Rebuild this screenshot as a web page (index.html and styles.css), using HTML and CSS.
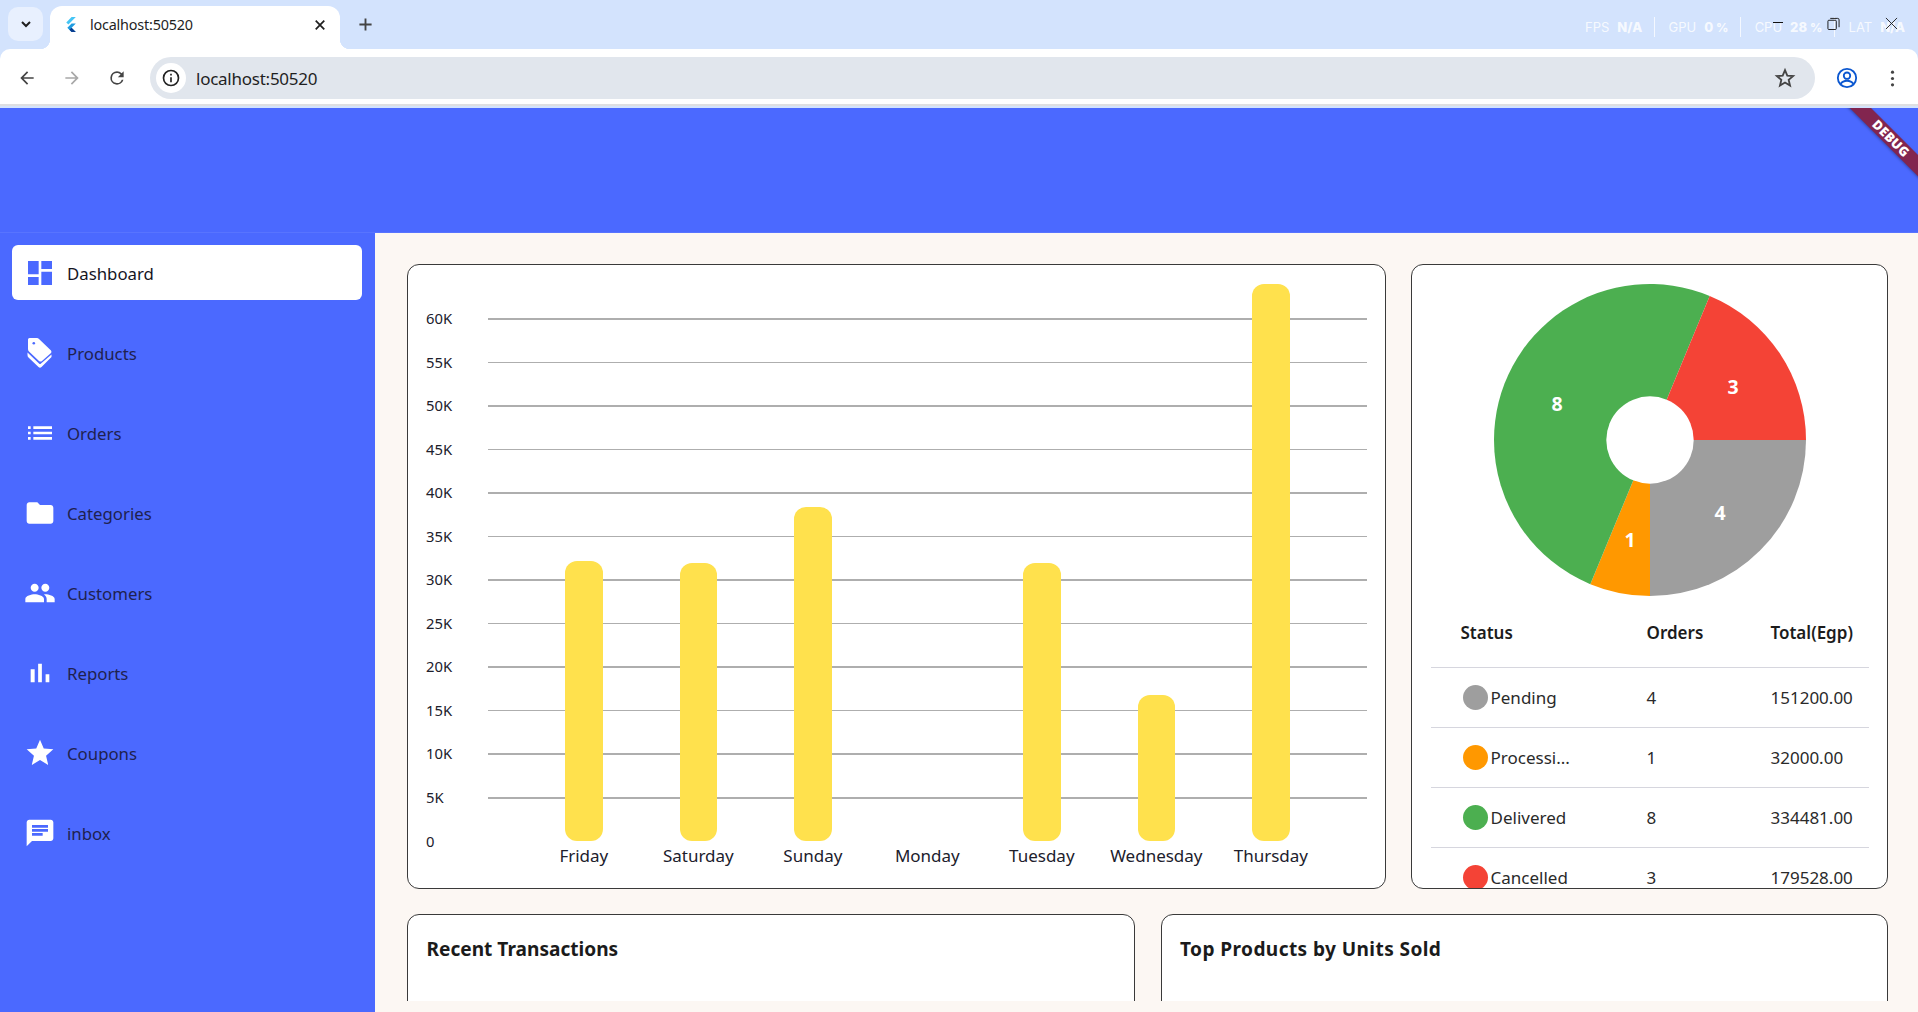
FILE: index.html
```html
<!DOCTYPE html>
<html lang="en">
<head>
<meta charset="utf-8">
<title>localhost:50520</title>
<link rel="stylesheet" href="styles.css">
</head>
<body>
<div class="browser">
  <div class="tabstrip">
    <button class="tab-menu"><svg class="ic-16" viewBox="0 0 24 24"><path d="M6 9l6 6 6-6" fill="none" stroke="#1f1f1f" stroke-width="3"/></svg></button>
    <div class="tab">
      <svg class="favicon" viewBox="0 0 12 16"><path d="M7 1h4L4 8 2 6z" fill="#45c5f5"/><path d="M7 7h4L7 11l4 4H7L3 11z" fill="#1f9be0"/><path d="M5 13l2-2 4 4H7z" fill="#0a3d8f"/></svg>
      <span class="tab-title">localhost:50520</span>
      <svg class="ic-14" viewBox="0 0 14 14"><path d="M2 2l10 10M12 2L2 12" stroke="#1f1f1f" stroke-width="2"/></svg>
    </div>
    <svg class="newtab" viewBox="0 0 16 16"><path d="M8 1.500v13M1.500 8h13" stroke="#444" stroke-width="2"/></svg>
    <div class="perf">
      <span class="perf-k">FPS</span><b>N/A</b><i class="perf-sep"></i>
      <span class="perf-k">GPU</span><b>0 <small>%</small></b><i class="perf-sep"></i>
      <span class="perf-k">CPU</span><b>28 <small>%</small></b><i class="perf-sep"></i>
      <span class="perf-k">LAT</span><b>N/A</b>
    </div>
    <div class="winctl">
      <span class="win-min"></span>
      <svg class="win-max" viewBox="0 0 14 14"><path d="M1 4.500a1 1 0 0 1 1-1h7a1 1 0 0 1 1 1v8a1 1 0 0 1-1 1H2a1 1 0 0 1-1-1zM3.500 1.500h8a1.500 1.500 0 0 1 1.500 1.500v8" fill="none" stroke="#111" stroke-width="1"/></svg>
      <svg class="win-close" viewBox="0 0 14 14"><path d="M1 1l12 12M13 1L1 13" stroke="#222" stroke-width="1"/></svg>
    </div>
  </div>
  <div class="toolbar">
    <svg class="tool" viewBox="0 0 24 24"><path d="M20 11H7.830l5.590-5.590L12 4l-8 8 8 8 1.410-1.410L7.830 13H20z" fill="#444"/></svg>
    <svg class="tool tool-off" viewBox="0 0 24 24"><path d="M4 11h12.170l-5.590-5.590L12 4l8 8-8 8-1.410-1.410L16.170 13H4z" fill="#a8a8a8"/></svg>
    <svg class="tool" viewBox="0 0 24 24"><path d="M17.650 6.350A7.960 7.960 0 0 0 12 4a8 8 0 1 0 7.730 10h-2.080A6 6 0 1 1 12 6c1.660 0 3.140.69 4.220 1.780L13 11h7V4z" fill="#444"/></svg>
    <div class="omnibox">
      <span class="site-info"><svg class="ic-20" viewBox="0 0 24 24"><circle cx="12" cy="12" r="9" fill="none" stroke="#222" stroke-width="2"/><path d="M11 11h2v6h-2zM11 7h2v2h-2z" fill="#222"/></svg></span>
      <span class="url">localhost:50520</span>
      <svg class="star" viewBox="0 0 24 24"><path d="M12 3.500l2.500 5.900 6.400.5-4.900 4.200 1.500 6.200L12 17l-5.500 3.300L8 14.100 3.100 9.900l6.400-.5z" fill="none" stroke="#444" stroke-width="2"/></svg>
    </div>
    <svg class="profile" viewBox="0 0 24 24"><circle cx="12" cy="12" r="10" fill="none" stroke="#0b57d0" stroke-width="2"/><circle cx="12" cy="9.500" r="3.500" fill="none" stroke="#0b57d0" stroke-width="2"/><path d="M5 18.500c2-3 4.500-3.500 7-3.500s5 .5 7 3.500" fill="none" stroke="#0b57d0" stroke-width="2"/></svg>
    <svg class="dots" viewBox="0 0 6 24"><circle cx="3" cy="4" r="2" fill="#444"/><circle cx="3" cy="12" r="2" fill="#444"/><circle cx="3" cy="20" r="2" fill="#444"/></svg>
  </div>
</div>

<div class="app">
  <header class="appbar"></header>
  <div class="ribbon"><span>DEBUG</span></div>
  <div class="app-body">
    <nav class="sidebar">
      <a class="nav-item active"><svg class="nav-icon" viewBox="0 0 24 24"><path d="M3 13h8V3H3v10zm0 8h8v-6H3v6zm10 0h8V11h-8v10zm0-18v6h8V3h-8z"/></svg>Dashboard</a>
      <a class="nav-item"><svg class="nav-icon" viewBox="0 0 32 32"><path d="M4 2.500Q4 1 5.500 1H13Q14 1 15 2L27 13.500Q28 15 27 16L18 24Q16.500 25 15 24L5 14.500Q4 13.500 4 12Z"/><path d="M3.500 15.500L15 26.500Q16 27.500 17 26.500L27.500 17.500V20L17.500 30Q16 31.500 14.500 30L4.500 20.500Q3.500 19.500 3.500 18Z"/><circle cx="9.800" cy="6.300" r="1.300" fill="#4b69ff"/></svg>Products</a>
      <a class="nav-item"><svg class="nav-icon" viewBox="0 0 24 24"><path d="M3 13h2v-2H3v2zm0 4h2v-2H3v2zm0-8h2V7H3v2zm4 4h14v-2H7v2zm0 4h14v-2H7v2zM7 7v2h14V7H7z"/></svg>Orders</a>
      <a class="nav-item"><svg class="nav-icon" viewBox="0 0 24 24"><path d="M10 4H4c-1.100 0-1.990.9-1.990 2L2 18c0 1.100.9 2 2 2h16c1.100 0 2-.9 2-2V8c0-1.100-.9-2-2-2h-8l-2-2z"/></svg>Categories</a>
      <a class="nav-item"><svg class="nav-icon" viewBox="0 0 24 24"><path d="M16 11c1.660 0 2.990-1.340 2.990-3S17.660 5 16 5c-1.660 0-3 1.340-3 3s1.340 3 3 3zm-8 0c1.660 0 2.990-1.340 2.990-3S9.660 5 8 5C6.340 5 5 6.340 5 8s1.340 3 3 3zm0 2c-2.330 0-7 1.170-7 3.500V19h14v-2.500c0-2.330-4.670-3.500-7-3.500zm8 0c-.29 0-.62.02-.97.05 1.160.84 1.970 1.970 1.970 3.450V19h6v-2.500c0-2.330-4.670-3.500-7-3.500z"/></svg>Customers</a>
      <a class="nav-item"><svg class="nav-icon" viewBox="0 0 24 24"><path d="M5 9.200h3V19H5zM10.600 5h2.800v14h-2.800zm5.600 8H19v6h-2.800z"/></svg>Reports</a>
      <a class="nav-item"><svg class="nav-icon" viewBox="0 0 24 24"><path d="M12 17.270L18.180 21l-1.640-7.030L22 9.240l-7.190-.61L12 2 9.190 8.630 2 9.240l5.460 4.730L5.820 21z"/></svg>Coupons</a>
      <a class="nav-item"><svg class="nav-icon" viewBox="0 0 24 24"><path d="M20 2H4c-1.100 0-1.990.9-1.990 2L2 22l4-4h14c1.100 0 2-.9 2-2V4c0-1.100-.9-2-2-2zM6 9h12v2H6V9zm8 5H6v-2h8v2zm4-6H6V6h12v2z"/></svg>inbox</a>
    </nav>

    <main class="main">
      <div class="main-clip">
        <div class="row-top">
          <section class="card card-chart">
            <div class="chart">
              <div class="grid-row"><span class="y-label">60K</span><i class="grid-line"></i></div>
              <div class="grid-row"><span class="y-label">55K</span><i class="grid-line"></i></div>
              <div class="grid-row"><span class="y-label">50K</span><i class="grid-line"></i></div>
              <div class="grid-row"><span class="y-label">45K</span><i class="grid-line"></i></div>
              <div class="grid-row"><span class="y-label">40K</span><i class="grid-line"></i></div>
              <div class="grid-row"><span class="y-label">35K</span><i class="grid-line"></i></div>
              <div class="grid-row"><span class="y-label">30K</span><i class="grid-line"></i></div>
              <div class="grid-row"><span class="y-label">25K</span><i class="grid-line"></i></div>
              <div class="grid-row"><span class="y-label">20K</span><i class="grid-line"></i></div>
              <div class="grid-row"><span class="y-label">15K</span><i class="grid-line"></i></div>
              <div class="grid-row"><span class="y-label">10K</span><i class="grid-line"></i></div>
              <div class="grid-row"><span class="y-label">5K</span><i class="grid-line"></i></div>
              <div class="grid-row"><span class="y-label">0</span></div>
              <div class="bars">
                <div class="bar-col"><i class="bar" style="height:280px"></i><span class="x-label">Friday</span></div>
                <div class="bar-col"><i class="bar" style="height:278px"></i><span class="x-label">Saturday</span></div>
                <div class="bar-col"><i class="bar" style="height:334px"></i><span class="x-label">Sunday</span></div>
                <div class="bar-col"><span class="x-label">Monday</span></div>
                <div class="bar-col"><i class="bar" style="height:278px"></i><span class="x-label">Tuesday</span></div>
                <div class="bar-col"><i class="bar" style="height:146px"></i><span class="x-label">Wednesday</span></div>
                <div class="bar-col"><i class="bar" style="height:557px"></i><span class="x-label">Thursday</span></div>
              </div>
            </div>
          </section>

          <section class="card card-status">
            <svg class="pie" viewBox="0 0 312 312">
              <path class="s-gray" d="M156 156H312A156 156 0 0 1 156 312Z"/>
              <path class="s-orange" d="M156 156V312A156 156 0 0 1 96.302 300.125Z"/>
              <path class="s-green" d="M156 156L96.302 300.125A156 156 0 0 1 0 156A156 156 0 0 1 215.698 11.875Z"/>
              <path class="s-red" d="M156 156L215.698 11.875A156 156 0 0 1 312 156Z"/>
              <circle class="s-hole" cx="156" cy="156" r="43.700"/>
              <text class="pie-label" x="239" y="102">3</text>
              <text class="pie-label" x="63" y="119">8</text>
              <text class="pie-label" x="226" y="228">4</text>
              <text class="pie-label" x="136" y="255">1</text>
            </svg>
            <div class="table">
              <div class="t-row t-head"><span class="c-status">Status</span><span class="c-orders">Orders</span><span>Total(Egp)</span></div>
              <div class="t-row"><span class="c-status"><i class="dot d-gray"></i><span class="st-name">Pending</span></span><span class="c-orders">4</span><span>151200.00</span></div>
              <div class="t-row"><span class="c-status"><i class="dot d-orange"></i><span class="st-name">Processi...</span></span><span class="c-orders">1</span><span>32000.00</span></div>
              <div class="t-row"><span class="c-status"><i class="dot d-green"></i><span class="st-name">Delivered</span></span><span class="c-orders">8</span><span>334481.00</span></div>
              <div class="t-row"><span class="c-status"><i class="dot d-red"></i><span class="st-name">Cancelled</span></span><span class="c-orders">3</span><span>179528.00</span></div>
            </div>
          </section>
        </div>
        <div class="row-bottom">
          <section class="card card-low"><h2 class="card-title">Recent Transactions</h2></section>
          <section class="card card-low"><h2 class="card-title card-title-wide">Top Products by Units Sold</h2></section>
        </div>
      </div>
    </main>
  </div>
</div>
</body>
</html>
```

FILE: styles.css
```css
* { box-sizing: border-box; }
html, body { margin: 0; height: 100%; }
body {
  width: 1918px;
  height: 1012px;
  overflow: hidden;
  display: flex;
  flex-direction: column;
  font-family: "Noto Sans", "Open Sans", sans-serif;
  color: #1d1d1d;
  background: #fcf7f3;
}
svg { display: block; flex: none; }

/* browser frame */
.browser { flex: none; height: 108px; background: #d3e3fd; position: relative; }
.tabstrip { height: 49px; display: flex; align-items: flex-start; position: relative; }
.tab-menu {
  margin: 7px 0 0 8px; width: 35px; height: 34px; border: 0; padding: 0;
  border-radius: 10px; background: #e8f0fe;
  display: flex; align-items: center; justify-content: center;
}
.ic-16 { width: 16px; height: 16px; }
.ic-14 { width: 12px; height: 12px; margin-left: auto; }
.ic-20 { width: 20px; height: 20px; }
.tab {
  margin: 6px 0 0 7px; width: 290px; height: 43px;
  background: #fff; border-radius: 12px 12px 0 0;
  display: flex; align-items: center; padding: 0 14px 6px 14px;
  position: relative;
}
.tab::before, .tab::after {
  content: ""; position: absolute; bottom: 0; width: 10px; height: 10px;
  background: radial-gradient(circle at 0 0, transparent 10px, #fff 10.500px);
}
.tab::before { left: -10px; }
.tab::after { right: -10px; background: radial-gradient(circle at 100% 0, transparent 10px, #fff 10.500px); }
.favicon { width: 13px; height: 17px; margin-right: 13px; }
.tab-title { font-size: 14.400px; letter-spacing: -.2px; color: #1f1f1f; }
.newtab { width: 15px; height: 15px; margin: 17px 0 0 18px; }
.perf {
  position: absolute; top: 16px; left: 1585px; width: 320px; height: 22px;
  display: flex; align-items: center; color: rgba(255,255,255,.82);
  font: 13px/22px Inter, sans-serif;
}
.perf-k { margin-right: 8px; }
.perf b { font-weight: 800; white-space: nowrap; }
.perf small { font-size: 12px; }
.perf-sep { width: 1px; height: 20px; background: rgba(255,255,255,.75); margin: 0 14px 0 12px; }
.winctl { position: absolute; top: 0; left: 0; width: 100%; height: 0; }
.win-min { position: absolute; left: 1773px; top: 22px; width: 10px; height: 1px; background: #111; }
.win-max { position: absolute; left: 1827px; top: 17px; width: 13px; height: 13px; }
.win-close { position: absolute; left: 1885px; top: 17px; width: 13px; height: 13px; }

.toolbar {
  height: 57px; background: #fff; border-radius: 10px 10px 0 0;
  border-bottom: 2px solid #dedfe2;
  display: flex; align-items: center; padding: 3px 16px 0 17px;
  position: relative;
}
.tool { width: 20px; height: 20px; margin-right: 25px; }
.omnibox {
  margin-left: -2px; width: 1665px; height: 42px; border-radius: 21px;
  background: #e1e6ed; display: flex; align-items: center; padding: 0 19px 0 6px;
}
.site-info {
  width: 30px; height: 30px; border-radius: 50%; background: #fff;
  display: flex; align-items: center; justify-content: center; margin-right: 10px;
}
.url { font-size: 17px; letter-spacing: -.25px; color: #1f1f1f; }
.star { width: 22px; height: 22px; margin-left: auto; }
.profile { width: 22px; height: 22px; margin-left: 21px; }
.dots { width: 5px; height: 19px; margin-left: 32px; }

/* app */
.app { flex: 1; position: relative; display: flex; flex-direction: column; min-height: 0; overflow: hidden; }
.appbar { height: 125px; flex: none; background: #4b69ff; border-bottom: 1px solid #5874ff; }
.ribbon {
  position: absolute; top: 22.750px; right: -43px; width: 140px; height: 14.500px;
  transform: rotate(45deg);
  background: #82254f; box-shadow: 0 1px 3px rgba(0,0,0,.35);
  display: flex; align-items: center; justify-content: center;
  color: #fff; font: 800 13px/14.500px "Open Sans", sans-serif; letter-spacing: .3px;
}
.app-body { flex: 1; display: flex; min-height: 0; }

.sidebar {
  width: 375px; flex: none; background: #4b69ff;
  padding: 12px 13px 0 12px;
  display: flex; flex-direction: column; gap: 25px;
}
.nav-item {
  height: 55px; display: flex; align-items: center; gap: 11px;
  padding: 1px 0 0 12px; border-radius: 6px;
  font-size: 16.800px; color: #20214f;
}
.nav-item.active { background: #fff; color: #15151f; }
.nav-icon { width: 32px; height: 32px; fill: #fff; }
.nav-item.active .nav-icon { fill: #4b69ff; }

.main { flex: 1; min-width: 0; padding: 0 30px 11px 32px; background: #fcf7f3; }
.main-clip { height: 100%; overflow: hidden; padding-top: 31px; display: flex; flex-direction: column; gap: 25px; }
.card {
  background: #fff; border: 1.500px solid #3a3a3a; border-radius: 12px;
  overflow: hidden;
}
.row-top { display: flex; gap: 25px; flex: none; height: 624.500px; }
.card-chart { width: 979px; position: relative; }
.card-status { flex: 1; display: flex; flex-direction: column; align-items: center; }
.row-bottom { display: flex; gap: 26px; flex: none; height: 200px; }
.card-low { flex: 1; padding: 20px 18.500px; }
.card-title { margin: 0; font-size: 19.100px; line-height: 28px; font-weight: 700; color: #1b1b1b; }
.card-title-wide { letter-spacing: .4px; }

/* bar chart */
.chart { position: absolute; left: 18px; top: 53px; right: 18.500px; display: flex; flex-direction: column; }
.grid-row { height: 43.550px; flex: none; display: flex; align-items: flex-start; }
.y-label {
  width: 62.200px; flex: none; font-size: 14.800px; line-height: 18px; margin-top: -9px; color: #20202c;
}
.grid-line { flex: 1; height: 1.500px; background: #aeaeae; }
.bars {
  position: absolute; left: 62.200px; right: 0; top: 0; height: 522.600px;
  display: grid; grid-template-columns: repeat(7, 114.500px);
  justify-content: center;
}
.bar-col { position: relative; }
.bar {
  position: absolute; bottom: 0; left: 50%; width: 37.500px; margin-left: -18.750px;
  background: #ffe14d; border-radius: 12px;
}
.x-label {
  position: absolute; top: 100%; left: -10px; right: -10px; margin-top: 4px;
  text-align: center; font-size: 17px; line-height: 22px; color: #20202c; white-space: nowrap;
}

/* status card */
.pie { width: 312px; height: 312px; margin-top: 19px; }
.s-gray { fill: #9e9e9e; }
.s-orange { fill: #ff9800; }
.s-green { fill: #4caf50; }
.s-red { fill: #f44336; }
.s-hole { fill: #fff; }
.pie-label { font-size: 19.500px; font-weight: 700; fill: #fff; text-anchor: middle; dominant-baseline: central; }

.table { width: 438px; flex: none; margin-top: 1.500px; }
.t-row {
  height: 60px; display: flex; align-items: center;
  border-top: 1.500px solid #d6d6de; padding: 1px 0 0 30px;
  font-size: 17px; color: #2a2a2a;
}
.t-head { border-top: 0; height: 69px; padding-top: 1px; font-weight: 600; color: #1c1c1c; }
.c-status { width: 186px; flex: none; display: flex; align-items: center; }
.c-orders { width: 124px; flex: none; }
.dot { width: 25px; height: 25px; border-radius: 50%; margin: 0 3px 0 2px; flex: none; }
.d-gray { background: #9e9e9e; }
.d-orange { background: #ff9800; }
.d-green { background: #4caf50; }
.d-red { background: #f44336; }
```
